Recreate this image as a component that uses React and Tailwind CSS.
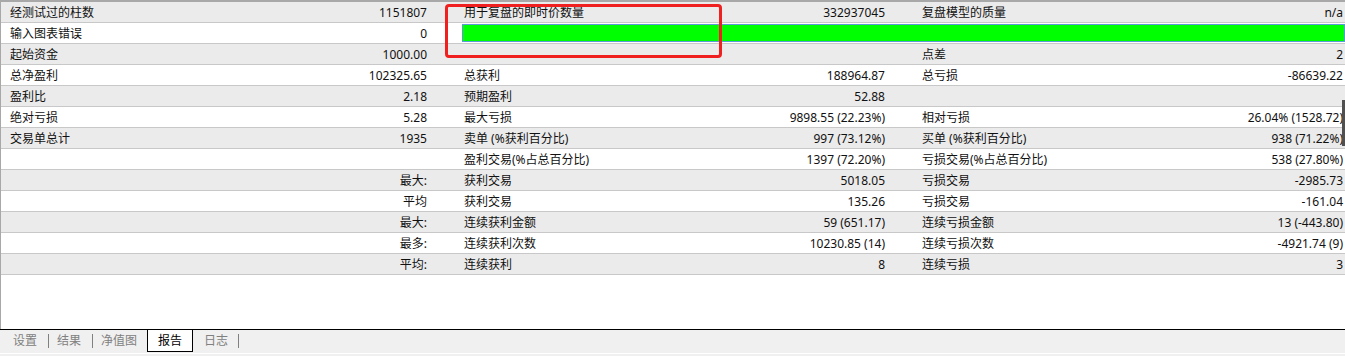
const rows = [
  [["经测试过的柱数", "1151807"], ["用于复盘的即时价数量", "332937045"], ["复盘模型的质量", "n/a"]],
  [["输入图表错误", "0"], "bar"],
  [["起始资金", "1000.00"], ["", ""], ["点差", "2"]],
  [["总净盈利", "102325.65"], ["总获利", "188964.87"], ["总亏损", "-86639.22"]],
  [["盈利比", "2.18"], ["预期盈利", "52.88"], ["", ""]],
  [["绝对亏损", "5.28"], ["最大亏损", "9898.55 (22.23%)"], ["相对亏损", "26.04% (1528.72)"]],
  [["交易单总计", "1935"], ["卖单 (%获利百分比)", "997 (73.12%)"], ["买单 (%获利百分比)", "938 (71.22%)"]],
  [["", ""], ["盈利交易(%占总百分比)", "1397 (72.20%)"], ["亏损交易(%占总百分比)", "538 (27.80%)"]],
  [["", "最大:"], ["获利交易", "5018.05"], ["亏损交易", "-2985.73"]],
  [["", "平均"], ["获利交易", "135.26"], ["亏损交易", "-161.04"]],
  [["", "最大:"], ["连续获利金额", "59 (651.17)"], ["连续亏损金额", "13 (-443.80)"]],
  [["", "最多:"], ["连续获利次数", "10230.85 (14)"], ["连续亏损次数", "-4921.74 (9)"]],
  [["", "平均:"], ["连续获利", "8"], ["连续亏损", "3"]],
];

const Cell = ({ label, value, first }) => (
  <div
    className={`flex w-[458px] shrink-0 items-center justify-between pr-[32px] pt-px ${
      first ? "pl-[9px]" : "pl-[5px]"
    }`}
  >
    <span className="whitespace-nowrap">{label}</span>
    <span className="whitespace-nowrap">{value}</span>
  </div>
);

const Tab = ({ children, active }) =>
  active ? (
    <div className="ml-[2px] flex h-[22px] items-center border-x border-b border-black bg-white px-[10px] text-black">
      {children}
    </div>
  ) : (
    <div className="flex h-[22px] items-center px-[8px] text-[#808080]">{children}</div>
  );

const Sep = ({ className = "ml-[3px]" }) => (
  <div className={`h-[14px] w-px bg-[#808080] ${className}`}></div>
);

export default function App() {
  return (
    <div
      className="relative flex h-[356px] w-[1345px] flex-col overflow-hidden bg-white text-[12px] leading-none text-[#111]"
      style={{ fontFamily: '"Noto Sans", "Noto Sans CJK SC", sans-serif' }}
    >
      <div className="flex flex-1 flex-col border-l border-t-2 border-[#a8a8a8]">
        {rows.map((row, i) => (
          <div
            key={i}
            className={`flex h-[21px] shrink-0 border-b border-[#c8c8c8] ${
              i % 2 === 0 ? "bg-[#ebebeb]" : "bg-white"
            }`}
          >
            <Cell label={row[0][0]} value={row[0][1]} first />
            {row[1] === "bar" ? (
              <div className="flex flex-1 items-center pl-[3px]">
                <div className="h-[18px] w-full border border-[#5b9bd5] bg-[#00ff00]"></div>
              </div>
            ) : (
              <>
                <Cell label={row[1][0]} value={row[1][1]} />
                <Cell label={row[2][0]} value={row[2][1]} />
              </>
            )}
          </div>
        ))}
        <div className="flex-1 bg-white"></div>
      </div>

      {/* tab strip */}
      <div className="flex h-[27px] shrink-0 flex-col border-t border-black bg-[#f0f0f0]">
        <div className="flex h-[22px] items-center pl-[5px]">
          <Tab>设置</Tab>
          <Sep />
          <Tab>结果</Tab>
          <Sep />
          <Tab>净值图</Tab>
          <Tab active>报告</Tab>
          <div className="ml-[3px]"></div>
          <Tab>日志</Tab>
          <Sep className="ml-[2px]" />
        </div>
        <div className="mt-[1px] h-px bg-white"></div>
      </div>

      {/* red annotation box */}
      <div className="absolute left-[445px] top-[4px] h-[54px] w-[277px] rounded-[4px] border-[3px] border-[#f02020]"></div>
      {/* scrollbar sliver on the right edge */}
      <div className="absolute right-0 top-[100px] h-[46px] w-[3px] bg-[#505050]"></div>
    </div>
  );
}
